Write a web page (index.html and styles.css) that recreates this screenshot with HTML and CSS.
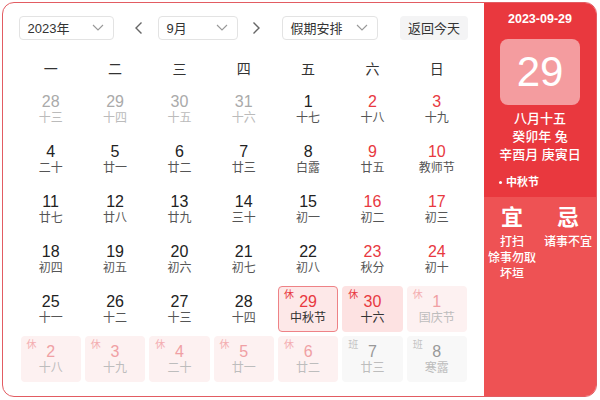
FILE: index.html
```html
<!DOCTYPE html>
<html lang="zh-CN">
<head>
<meta charset="utf-8">
<title>万年历</title>
<link rel="stylesheet" href="styles.css">
</head>
<body>
<div class="cal">
  <div class="main">
    <div class="toolbar">
      <div class="select year"><span>2023年</span><svg class="chev" width="12" height="7" viewBox="0 0 12 7"><path d="M1 1l5 5 5-5" fill="none" stroke="#999" stroke-width="1.1"/></svg></div>
      <div class="arrow"><svg width="9" height="14" viewBox="0 0 9 14"><path d="M7.5 1.5L2 7l5.5 5.5" fill="none" stroke="#666" stroke-width="1.4"/></svg></div>
      <div class="select month"><span>9月</span><svg class="chev" width="12" height="7" viewBox="0 0 12 7"><path d="M1 1l5 5 5-5" fill="none" stroke="#999" stroke-width="1.1"/></svg></div>
      <div class="arrow"><svg width="9" height="14" viewBox="0 0 9 14"><path d="M1.5 1.5L7 7l-5.5 5.5" fill="none" stroke="#666" stroke-width="1.4"/></svg></div>
      <div class="select holiday"><span>假期安排</span><svg class="chev" width="12" height="7" viewBox="0 0 12 7"><path d="M1 1l5 5 5-5" fill="none" stroke="#999" stroke-width="1.1"/></svg></div>
      <div class="today">返回今天</div>
    </div>
    <div class="weekdays">
      <div>一</div><div>二</div><div>三</div><div>四</div><div>五</div><div>六</div><div>日</div>
    </div>
    <div class="grid">
      <div class="cell other"><span class="num">28</span><span class="lunar">十三</span></div>
      <div class="cell other"><span class="num">29</span><span class="lunar">十四</span></div>
      <div class="cell other"><span class="num">30</span><span class="lunar">十五</span></div>
      <div class="cell other"><span class="num">31</span><span class="lunar">十六</span></div>
      <div class="cell"><span class="num">1</span><span class="lunar">十七</span></div>
      <div class="cell wk"><span class="num">2</span><span class="lunar">十八</span></div>
      <div class="cell wk"><span class="num">3</span><span class="lunar">十九</span></div>

      <div class="cell"><span class="num">4</span><span class="lunar">二十</span></div>
      <div class="cell"><span class="num">5</span><span class="lunar">廿一</span></div>
      <div class="cell"><span class="num">6</span><span class="lunar">廿二</span></div>
      <div class="cell"><span class="num">7</span><span class="lunar">廿三</span></div>
      <div class="cell"><span class="num">8</span><span class="lunar">白露</span></div>
      <div class="cell wk"><span class="num">9</span><span class="lunar">廿五</span></div>
      <div class="cell wk"><span class="num">10</span><span class="lunar">教师节</span></div>

      <div class="cell"><span class="num">11</span><span class="lunar">廿七</span></div>
      <div class="cell"><span class="num">12</span><span class="lunar">廿八</span></div>
      <div class="cell"><span class="num">13</span><span class="lunar">廿九</span></div>
      <div class="cell"><span class="num">14</span><span class="lunar">三十</span></div>
      <div class="cell"><span class="num">15</span><span class="lunar">初一</span></div>
      <div class="cell wk"><span class="num">16</span><span class="lunar">初二</span></div>
      <div class="cell wk"><span class="num">17</span><span class="lunar">初三</span></div>

      <div class="cell"><span class="num">18</span><span class="lunar">初四</span></div>
      <div class="cell"><span class="num">19</span><span class="lunar">初五</span></div>
      <div class="cell"><span class="num">20</span><span class="lunar">初六</span></div>
      <div class="cell"><span class="num">21</span><span class="lunar">初七</span></div>
      <div class="cell"><span class="num">22</span><span class="lunar">初八</span></div>
      <div class="cell wk"><span class="num">23</span><span class="lunar">秋分</span></div>
      <div class="cell wk"><span class="num">24</span><span class="lunar">初十</span></div>

      <div class="cell"><span class="num">25</span><span class="lunar">十一</span></div>
      <div class="cell"><span class="num">26</span><span class="lunar">十二</span></div>
      <div class="cell"><span class="num">27</span><span class="lunar">十三</span></div>
      <div class="cell"><span class="num">28</span><span class="lunar">十四</span></div>
      <div class="cell rest selected"><span class="tag">休</span><span class="num">29</span><span class="lunar">中秋节</span></div>
      <div class="cell rest"><span class="tag">休</span><span class="num">30</span><span class="lunar">十六</span></div>
      <div class="cell rest other"><span class="tag">休</span><span class="num">1</span><span class="lunar">国庆节</span></div>

      <div class="cell rest other"><span class="tag">休</span><span class="num">2</span><span class="lunar">十八</span></div>
      <div class="cell rest other"><span class="tag">休</span><span class="num">3</span><span class="lunar">十九</span></div>
      <div class="cell rest other"><span class="tag">休</span><span class="num">4</span><span class="lunar">二十</span></div>
      <div class="cell rest other"><span class="tag">休</span><span class="num">5</span><span class="lunar">廿一</span></div>
      <div class="cell rest other"><span class="tag">休</span><span class="num">6</span><span class="lunar">廿二</span></div>
      <div class="cell work other"><span class="tag">班</span><span class="num">7</span><span class="lunar">廿三</span></div>
      <div class="cell work other"><span class="tag">班</span><span class="num">8</span><span class="lunar">寒露</span></div>
    </div>
  </div>
  <div class="side">
    <div class="side-top">
      <div class="side-date">2023-09-29</div>
      <div class="big-day">29</div>
      <div class="lunar-info">
        <div>八月十五</div>
        <div>癸卯年 兔</div>
        <div>辛酉月 庚寅日</div>
      </div>
      <div class="festival"><span class="dot"></span>中秋节</div>
    </div>
    <div class="side-bottom">
      <div class="yiji">
        <div class="yj-head">宜</div>
        <div class="yj-item">打扫</div>
        <div class="yj-item">馀事勿取</div>
        <div class="yj-item">坏垣</div>
      </div>
      <div class="yiji">
        <div class="yj-head">忌</div>
        <div class="yj-item">诸事不宜</div>
      </div>
    </div>
  </div>
</div>
</body>
</html>
```

FILE: styles.css
```css
* { box-sizing: border-box; }
html, body { margin: 0; padding: 0; background: #fff; }
body {
  font-family: "Liberation Sans", "Noto Sans CJK SC", sans-serif;
  color: #222;
}
.cal {
  margin: 2px 0 0 2px;
  width: 595px;
  height: 395px;
  border: 1.5px solid #e25c62;
  border-radius: 12px;
  overflow: hidden;
  display: flex;
}
.main {
  flex: 1;
  padding: 12.5px 16px 0 15.5px;
}
.toolbar {
  display: flex;
  align-items: center;
  height: 24px;
}
.select {
  height: 24px;
  border: 1px solid #e3e3e3;
  border-radius: 4px;
  display: flex;
  align-items: center;
  justify-content: space-between;
  padding: 0 9px 0 8px;
  font-size: 13px;
  color: #333;
  background: #fff;
}
.year { width: 95px; }
.month { width: 80px; }
.holiday { width: 96px; }
.chev { display: block; }
.arrow {
  width: 24px;
  height: 24px;
  display: flex;
  align-items: center;
  justify-content: center;
  margin: 0 7px 0 13px;
}
.arrow + .select.month { }
.month + .arrow { margin: 0 13px 0 7px; }
.today {
  margin-left: auto;
  width: 68px;
  height: 24px;
  border-radius: 4px;
  background: #f4f4f5;
  font-size: 13px;
  color: #333;
  display: flex;
  align-items: center;
  justify-content: center;
}
.weekdays {
  margin: 10px 1px 0 2px;
  height: 36px;
  display: grid;
  grid-template-columns: repeat(7, 1fr);
  column-gap: 4px;
  align-items: center;
  text-align: center;
  font-size: 14px;
  color: #333;
}
.grid {
  margin: 0 1px 0 2px;
  display: grid;
  grid-template-columns: repeat(7, 1fr);
  grid-auto-rows: 46px;
  gap: 4px;
}
.cell {
  position: relative;
  display: flex;
  flex-direction: column;
  align-items: center;
  padding-top: 7px;
  border-radius: 4px;
}
.num {
  font-size: 16px;
  line-height: 18px;
  color: #222;
}
.lunar {
  font-size: 12px;
  line-height: 14px;
  color: #555;
}
.wk .num { color: #e8393f; }
.other .num { color: #aaa; }
.other .lunar { color: #bbb; }
.tag {
  position: absolute;
  top: 3px;
  left: 6px;
  font-size: 10px;
  line-height: 12px;
  color: #e8393f;
}
.rest { background: #fde2e2; }
.rest .num { color: #e8393f; }
.rest .lunar { color: #333; }
.selected {
  background: #fde8e8;
  border: 1px solid #ee8286;
  padding-top: 6px;
}
.selected .tag { top: 2px; left: 5px; }
.rest.other { background: #fdf1f1; }
.rest.other .num { color: #f0a0a4; }
.rest.other .tag { color: #f4aeb1; }
.rest.other .lunar { color: #bdbdbd; }
.work { background: #f8f8f8; }
.work .num { color: #999; }
.work .tag { color: #c4c4c4; }
.work .lunar { color: #bdbdbd; }

.side {
  width: 112px;
  display: flex;
  flex-direction: column;
  color: #fff;
}
.side-top {
  height: 194px;
  background: #e9383e;
  display: flex;
  flex-direction: column;
  align-items: center;
  padding-top: 9px;
}
.side-date {
  font-size: 12.5px;
  font-weight: bold;
  line-height: 14px;
}
.big-day {
  margin-top: 13px;
  width: 80px;
  height: 66px;
  border-radius: 8px;
  background: rgba(255, 255, 255, 0.5);
  font-size: 42px;
  line-height: 66px;
  text-align: center;
  color: #fff;
}
.lunar-info {
  margin-top: 5px;
  text-align: center;
  font-size: 13px;
  line-height: 18px;
  font-weight: 500;
}
.festival {
  align-self: flex-start;
  margin: 11px 0 0 15px;
  font-size: 11px;
  line-height: 14px;
  font-weight: bold;
  display: flex;
  align-items: center;
}
.dot {
  width: 3px;
  height: 3px;
  border-radius: 50%;
  background: #fff;
  margin-right: 4px;
}
.side-bottom {
  flex: 1;
  background: #ee5254;
  display: grid;
  grid-template-columns: 1fr 1fr;
  align-items: start;
  padding-top: 10px;
}
.yiji {
  display: flex;
  flex-direction: column;
  align-items: center;
}
.yj-head {
  font-size: 22px;
  line-height: 22px;
  font-weight: bold;
  margin-bottom: 5px;
}
.yj-item {
  font-size: 12px;
  line-height: 16px;
  font-weight: 500;
  white-space: nowrap;
}
```
